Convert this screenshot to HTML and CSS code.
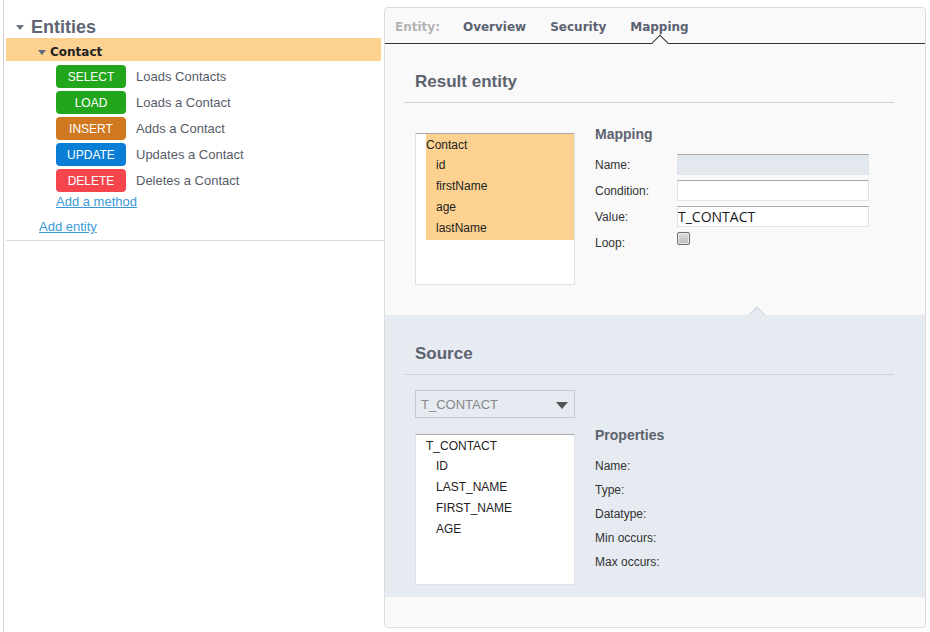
FILE: index.html
```html
<!DOCTYPE html>
<html>
<head>
<meta charset="utf-8">
<title>Entities mapping</title>
<link rel="stylesheet" href="styles.css">
</head>
<body>
<div class="page">
  <aside class="sidebar">
    <div class="tree">
      <div class="root"><span class="caret caret-lg"></span><span class="root-title">Entities</span></div>
      <div class="entity-row"><span class="caret caret-sm"></span><span class="entity-name">Contact</span></div>
      <ul class="methods">
        <li><span class="badge b-select">SELECT</span><span class="desc">Loads Contacts</span></li>
        <li><span class="badge b-load">LOAD</span><span class="desc">Loads a Contact</span></li>
        <li><span class="badge b-insert">INSERT</span><span class="desc">Adds a Contact</span></li>
        <li><span class="badge b-update">UPDATE</span><span class="desc">Updates a Contact</span></li>
        <li><span class="badge b-delete">DELETE</span><span class="desc">Deletes a Contact</span></li>
      </ul>
      <a class="link add-method" href="#">Add a method</a>
      <a class="link add-entity" href="#">Add entity</a>
    </div>
  </aside>

  <main class="panel">
    <nav class="tabs">
      <span class="tab-label">Entity:</span>
      <span class="tab">Overview</span>
      <span class="tab">Security</span>
      <span class="tab active">Mapping</span>
    </nav>

    <section class="result">
      <h2 class="sec-title">Result entity</h2>
      <div class="cols">
        <div class="tree-box result-tree">
          <div class="node selected">
            <div class="n-root">Contact</div>
            <div class="n-child">id</div>
            <div class="n-child">firstName</div>
            <div class="n-child">age</div>
            <div class="n-child">lastName</div>
          </div>
        </div>
        <div class="form">
          <h3 class="sub-title">Mapping</h3>
          <div class="fields">
            <span class="lbl">Name:</span><div class="input disabled"></div>
            <span class="lbl">Condition:</span><div class="input"></div>
            <span class="lbl">Value:</span><div class="input value">T_CONTACT</div>
            <span class="lbl">Loop:</span><span class="checkbox"></span>
          </div>
        </div>
      </div>
    </section>

    <section class="source">
      <h2 class="sec-title">Source</h2>
      <div class="cols src-cols">
        <div class="src-left">
          <div class="select">T_CONTACT<span class="select-arrow"></span></div>
          <div class="tree-box source-tree">
            <div class="node">
              <div class="n-root">T_CONTACT</div>
              <div class="n-child">ID</div>
              <div class="n-child">LAST_NAME</div>
              <div class="n-child">FIRST_NAME</div>
              <div class="n-child">AGE</div>
            </div>
          </div>
        </div>
        <div class="props">
          <h3 class="sub-title">Properties</h3>
          <div class="prop-row">Name:</div>
          <div class="prop-row">Type:</div>
          <div class="prop-row">Datatype:</div>
          <div class="prop-row">Min occurs:</div>
          <div class="prop-row">Max occurs:</div>
        </div>
      </div>
    </section>

    <div class="footer"></div>
  </main>
</div>
</body>
</html>
```

FILE: styles.css
```css
* { box-sizing: border-box; }

html, body {
  margin: 0;
  padding: 0;
}

body {
  width: 930px;
  height: 632px;
  overflow: hidden;
  background: #fff;
  color: #333;
  font-family: "Liberation Sans", Arial, sans-serif;
}

.page {
  display: flex;
  height: 632px;
  padding-left: 3px;
}

/* ---------- sidebar ---------- */
.sidebar {
  flex: none;
  width: 381px;
  border-left: 1px solid #d2d2d2;
}

.tree {
  margin-left: 2px;
  padding: 14px 0 5px;
  border-bottom: 1px solid #dcdcdc;
}

.root {
  display: flex;
  align-items: center;
  height: 24px;
  padding-top: 2px;
}

.caret {
  display: inline-block;
  width: 0;
  height: 0;
  border-style: solid;
  border-color: transparent;
}

.caret-lg {
  margin-left: 10px;
  margin-right: 7px;
  border-width: 5px 4.5px 0 4.5px;
  border-top-color: #6d7280;
}

.root-title {
  font-size: 18px;
  font-weight: bold;
  color: #5f6573;
  line-height: 22px;
}

.entity-row {
  display: flex;
  align-items: center;
  height: 23px;
  padding-top: 5px;
  margin-right: 3px;
  background: #fdd291;
}

.caret-sm {
  margin-left: 32px;
  margin-right: 4px;
  border-width: 5px 4px 0 4px;
  border-top-color: #5f6b80;
}

.entity-name {
  font-family: "DejaVu Sans", Verdana, sans-serif;
  font-size: 12px;
  font-weight: bold;
  color: #222;
}

.methods {
  list-style: none;
  margin: 4px 0 0;
  padding: 0 0 0 50px;
  display: flex;
  flex-direction: column;
  gap: 3px;
}

.methods li {
  display: flex;
  align-items: center;
  height: 23px;
}

.badge {
  flex: none;
  width: 70px;
  height: 23px;
  padding-top: 1px;
  line-height: 22px;
  border-radius: 4px;
  text-align: center;
  color: #fff;
  font-size: 12px;
}

.b-select, .b-load { background: #22a71c; }
.b-insert { background: #d07820; }
.b-update { background: #0b7fd5; }
.b-delete { background: #f5464e; }

.desc {
  margin-left: 10px;
  font-size: 13px;
  color: #575c68;
}

.link {
  display: block;
  width: max-content;
  font-size: 13px;
  line-height: 16px;
  color: #3a98d8;
  text-decoration: underline;
}

.add-method {
  margin: 2px 0 0 50px;
}

.add-entity {
  margin: 9px 0 0 33px;
}

/* ---------- main panel ---------- */
.panel {
  flex: none;
  width: 542px;
  height: 621px;
  margin-top: 7px;
  border: 1px solid #dcdcdc;
  border-radius: 4px;
  background: #f9f9f9;
  display: flex;
  flex-direction: column;
  overflow: hidden;
}

.tabs {
  flex: none;
  display: flex;
  align-items: stretch;
  gap: 24px;
  height: 36px;
  padding: 3px 0 0 10px;
  border-bottom: 1px solid #333;
  font-family: "DejaVu Sans", Verdana, sans-serif;
  font-size: 12px;
  font-weight: bold;
}

.tab-label,
.tab {
  line-height: 32px;
}

.tab-label {
  color: #b3b3b3;
  margin-right: -1px;
}

.tab {
  color: #5b6272;
}

.tab.active {
  position: relative;
}

.tab.active::after {
  content: "";
  position: absolute;
  left: 50%;
  bottom: -6px;
  width: 11px;
  height: 11px;
  margin-left: -5.5px;
  background: #f9f9f9;
  border-top: 1px solid #333;
  border-left: 1px solid #333;
  transform: rotate(45deg);
}

.sec-title {
  margin: 0;
  padding: 1px 11px 10px;
  font-size: 17px;
  line-height: 20px;
  font-weight: bold;
  color: #5d636e;
  border-bottom: 1px solid #cfd3d9;
}

.sub-title {
  margin: 0;
  font-size: 14px;
  line-height: 18px;
  font-weight: bold;
  color: #5d636e;
}

.result {
  flex: none;
  padding: 27px 31px 30px 19px;
}

.cols {
  display: flex;
  gap: 20px;
  padding-left: 11px;
  margin-top: 22px;
}

.tree-box {
  flex: none;
  width: 160px;
  background: #fff;
  border: 1px solid #dde2e8;
  border-top-color: #a9a9a9;
  padding-left: 10px;
  font-size: 12px;
  color: #222;
}

.result-tree {
  height: 152px;
  margin-top: 8px;
}

.node {
  padding-top: 1px;
}

.node.selected {
  background: #fdd291;
  padding-bottom: 1px;
}

.n-root {
  line-height: 20px;
}

.n-child {
  line-height: 21px;
  padding-left: 10px;
}

.form .sub-title {
  margin-bottom: 11px;
}

.fields {
  display: grid;
  grid-template-columns: 82px 192px;
  grid-auto-rows: 21px;
  row-gap: 5px;
}

.lbl {
  align-self: center;
  font-size: 12px;
  color: #333;
}

.input {
  height: 21px;
  background: #fff;
  border: 1px solid #dfe4ea;
  border-top-color: #a9a9a9;
}

.input.disabled {
  background: #e3e8ef;
}

.input.value {
  padding-left: 0;
  font-family: "Open Sans", "Noto Sans", sans-serif;
  font-size: 14px;
  line-height: 19px;
  color: #1a1a1a;
}

.checkbox {
  width: 13px;
  height: 13px;
  border: 1px solid #6e6e6e;
  border-radius: 2px;
  background: linear-gradient(#dcdcdc, #bcbcbc);
  box-shadow: inset 0 0 0 1px #eaeaea;
}

/* ---------- source ---------- */
.source {
  flex: none;
  position: relative;
  padding: 28px 31px 12px 19px;
  background: #e6eaf1;
}

.source::before {
  content: "";
  position: absolute;
  top: -6px;
  left: 366px;
  width: 11px;
  height: 11px;
  background: #e6eaf1;
  border-top: 1px solid #cfd5de;
  border-left: 1px solid #cfd5de;
  transform: rotate(45deg);
}

.src-cols {
  margin-top: 15px;
}

.src-left {
  flex: none;
  width: 160px;
}

.select {
  position: relative;
  height: 28px;
  border: 1px solid #c6cad0;
  padding: 1px 0 0 5px;
  font-size: 13px;
  line-height: 25px;
  color: #888;
}

.select-arrow {
  position: absolute;
  right: 6px;
  top: 11px;
  width: 0;
  height: 0;
  border-style: solid;
  border-width: 7px 6.5px 0 6.5px;
  border-color: #555 transparent transparent transparent;
}

.source-tree {
  height: 151px;
  margin-top: 16px;
}

.props {
  padding-top: 36px;
}

.props .sub-title {
  margin-bottom: 10px;
}

.prop-row {
  height: 24px;
  line-height: 24px;
  font-size: 12px;
  color: #333;
}

.footer {
  flex: 1;
  background: #f9f9f9;
}
```
